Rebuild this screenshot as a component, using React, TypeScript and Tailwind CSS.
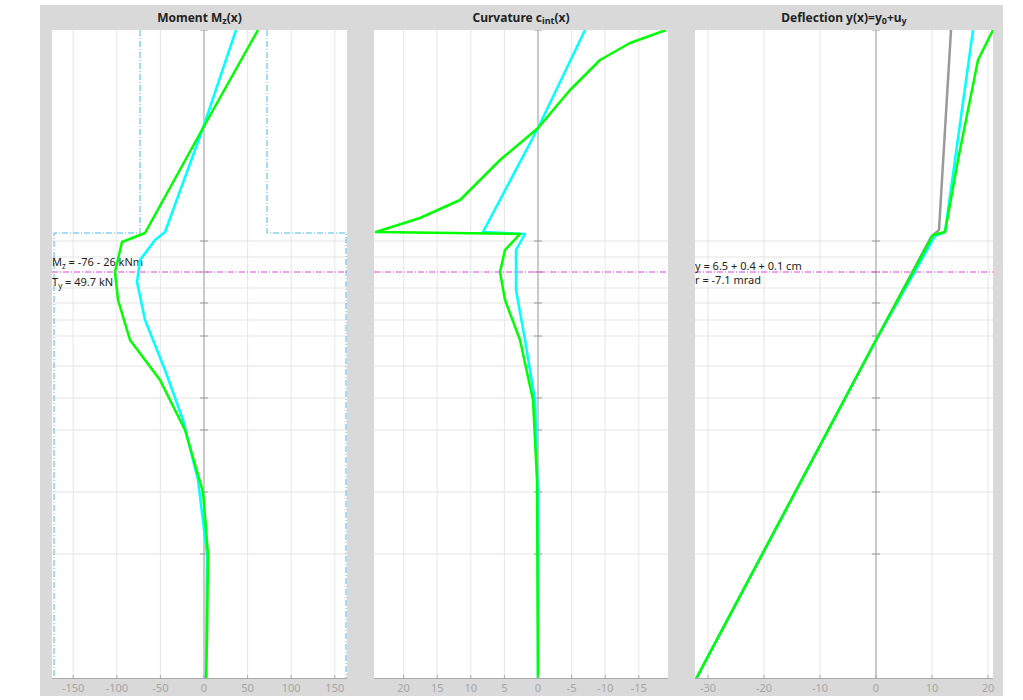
const H = 649;
const hLines = [211, 227, 258, 273, 290, 306, 336, 368, 400, 462, 524];
const MAG = 242;

type Curve = { pts: [number, number][]; color: string };

const pts = (p: [number, number][]) => p.map(([x, y]) => `${x},${y}`).join(" ");

function Plot({
  width,
  zero,
  grid,
  labels,
  curves,
  title,
  extra,
}: {
  width: number;
  zero: number;
  grid: number[];
  labels: { x: number; t: string }[];
  curves: Curve[];
  title: React.ReactNode;
  extra?: React.ReactNode;
}) {
  return (
    <div className="flex flex-col" style={{ width }}>
      <div className="h-[25px] flex items-center justify-center text-[12px] font-bold text-[#222]">{title}</div>
      <svg width={width} height={H} className="bg-white block">
        {grid.map((x) => (
          <line key={x} x1={x} x2={x} y1={0} y2={H} stroke="#e6e6e6" strokeWidth={1} />
        ))}
        {hLines.map((y) => (
          <line key={y} x1={0} x2={width} y1={y} y2={y} stroke="#e3e3e3" strokeWidth={1} />
        ))}
        <line x1={zero} x2={zero} y1={0} y2={H} stroke="#a0a0a0" strokeWidth={1} />
        {[0, 211, 242, 273, 306, 368, 400, 462, 524].map((y) => (
          <line key={y} x1={zero - 4} x2={zero + 4} y1={y} y2={y} stroke="#999" strokeWidth={1} />
        ))}
        <line x1={0} x2={width} y1={MAG} y2={MAG} stroke="#e040e0" strokeWidth={1} strokeDasharray="6 2 1 2" />
        {extra}
        {curves.map((c, i) => (
          <polyline key={i} points={pts(c.pts)} fill="none" stroke={c.color} strokeWidth={2.5} strokeLinejoin="round" />
        ))}
        <line x1={0} x2={width} y1={H - 0.5} y2={H - 0.5} stroke="#aaa" strokeWidth={1} />
        {labels.map((l) => (
          <line key={l.t} x1={l.x} x2={l.x} y1={H} y2={H - 4} stroke="#aaa" strokeWidth={1} />
        ))}
      </svg>
      <div className="relative h-[17px] text-[11px] text-[#a6a6a6]">
        {labels.map((l) => (
          <span key={l.t} className="absolute top-[3px] -translate-x-1/2 leading-none" style={{ left: l.x }}>
            {l.t}
          </span>
        ))}
      </div>
    </div>
  );
}

const txt = "font-['Liberation_Sans',Arial,sans-serif]";

export default function App() {
  const m = [-150, -100, -50, 0, 50, 100, 150].map((v) => ({ x: 152 + v * 0.872, t: String(v) }));
  const c = [20, 15, 10, 5, 0, -5, -10, -15].map((v) => ({ x: 164 - v * 6.72, t: String(v) }));
  const d = [-30, -20, -10, 0, 10, 20].map((v) => ({ x: 181 + v * 5.6, t: String(v) }));
  return (
    <div className={`w-[1023px] h-[700px] bg-white pt-[5px] pl-[40px] ${txt}`}>
      <div className="w-[963px] h-[691px] bg-[#d9d9d9] flex pl-[12px] gap-[27px]">
        <Plot
          width={295}
          zero={152}
          grid={m.map((l) => l.x)}
          labels={m}
          title={<span>Moment M<sub className="text-[9px]">z</sub>(x)</span>}
          curves={[
            { color: "#00ffff", pts: [[184, 0], [151, 98], [113, 202], [103, 210], [88, 230], [85, 252], [93, 290], [113, 340], [131, 390], [146, 450], [155, 524], [154, 649]] },
            { color: "#00ff00", pts: [[206, 0], [151, 98], [93, 203], [70, 212], [63, 242], [66, 270], [78, 310], [108, 350], [133, 400], [151, 462], [156, 524], [155, 610], [154, 649]] },
          ]}
          extra={
            <>
              <polyline points="88,0 88,203 2,203 2,649" fill="none" stroke="#4db8e8" strokeWidth={1} strokeDasharray="6 2 1 2" />
              <polyline points="215,0 215,203 294,203 294,649" fill="none" stroke="#4db8e8" strokeWidth={1} strokeDasharray="6 2 1 2" />
              <text x={0} y={236} fontSize={11} fill="#222">M<tspan fontSize={8} dy={3}>z</tspan><tspan dy={-3}> = -76 - 26 kNm</tspan></text>
              <text x={0} y={256} fontSize={11} fill="#222">T<tspan fontSize={8} dy={3}>y</tspan><tspan dy={-3}> = 49.7 kN</tspan></text>
            </>
          }
        />
        <Plot
          width={294}
          zero={164}
          grid={c.map((l) => l.x)}
          labels={c}
          title={<span>Curvature c<sub className="text-[9px]">int</sub>(x)</span>}
          curves={[
            { color: "#00ffff", pts: [[211, 0], [164, 98], [109, 202], [151, 204], [142, 220], [142, 260], [151, 310], [161, 370], [164, 470], [164, 649]] },
            { color: "#00ff00", pts: [[292, 0], [256, 13], [226, 30], [196, 60], [164, 98], [126, 130], [86, 170], [46, 188], [2, 202], [146, 204], [131, 220], [126, 242], [131, 270], [146, 310], [159, 370], [163, 450], [164, 649]] },
          ]}
        />
        <Plot
          width={298}
          zero={181}
          grid={d.map((l) => l.x)}
          labels={d}
          title={<span>Deflection y(x)=y<sub className="text-[9px]">0</sub>+u<sub className="text-[9px]">y</sub></span>}
          curves={[
            { color: "#999999", pts: [[256, 0], [244, 200], [236, 207], [181, 310], [1, 649]] },
            { color: "#00ffff", pts: [[278, 0], [250, 202], [240, 206], [181, 310], [1, 649]] },
            { color: "#00ff00", pts: [[298, 0], [283, 30], [263, 130], [250, 202], [238, 205], [181, 310], [1, 649]] },
          ]}
          extra={
            <>
              <text x={0} y={240} fontSize={11} fill="#222">y = 6.5 + 0.4 + 0.1 cm</text>
              <text x={0} y={254} fontSize={11} fill="#222">r = -7.1 mrad</text>
            </>
          }
        />
      </div>
    </div>
  );
}
